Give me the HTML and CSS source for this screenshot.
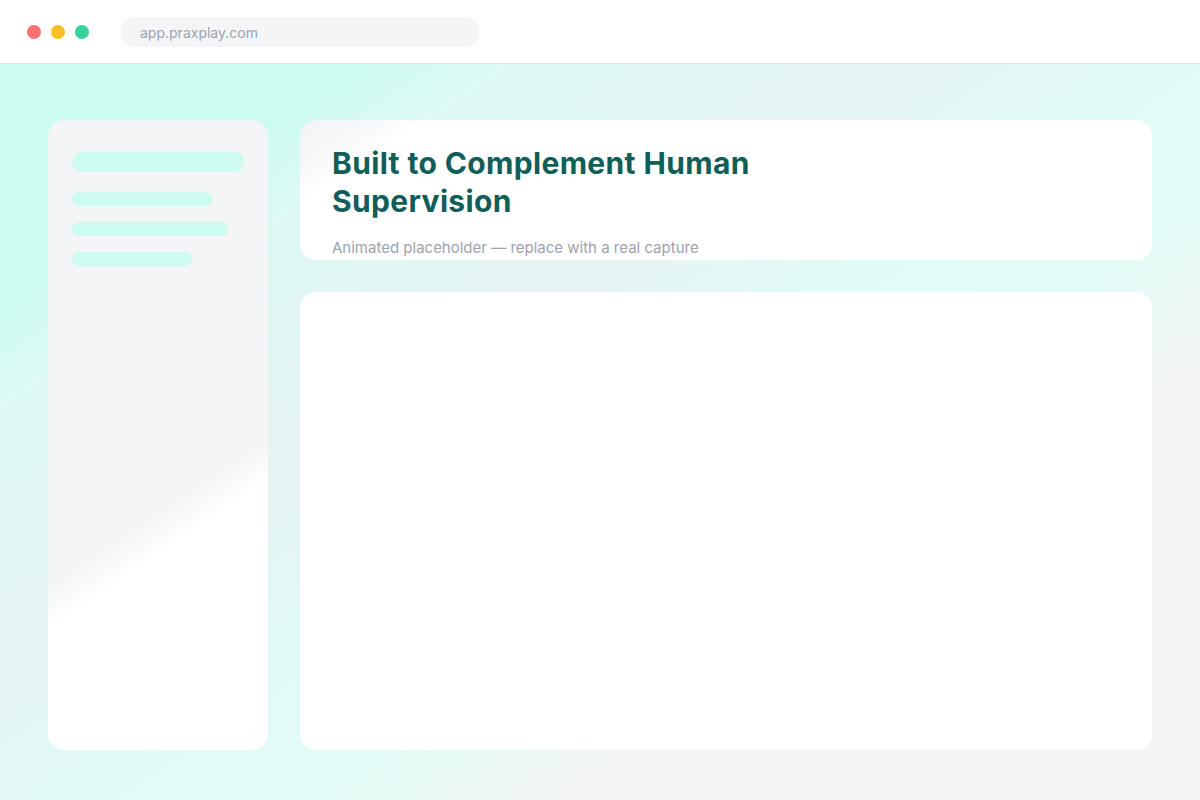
FILE: index.html
```html
<!DOCTYPE html>
<html lang="en">
<head>
    <meta charset="UTF-8">
    <meta name="viewport" content="width=device-width, initial-scale=1.0">
    <title>PraxPlay</title>
    <link rel="stylesheet" href="styles.css">
</head>
<body>
    <div class="browser-bar">
        <div class="dots">
            <span class="dot red"></span>
            <span class="dot yellow"></span>
            <span class="dot green"></span>
        </div>
        <div class="url">app.praxplay.com</div>
    </div>

    <div class="stage">
        <aside class="sidebar">
            <div class="bar bar-lg"></div>
            <div class="bar bar-a"></div>
            <div class="bar bar-b"></div>
            <div class="bar bar-c"></div>
        </aside>

        <main class="content">
            <div class="card header-card">
                <h1>Built to Complement Human Supervision</h1>
                <p>Animated placeholder — replace with a real capture</p>
            </div>
            <div class="card capture"></div>
        </main>
    </div>
</body>
</html>
```

FILE: styles.css
```css
* { box-sizing: border-box; }
html, body { margin: 0; height: 100%; }
body { font-family: Inter, "Noto Sans", sans-serif; background: #fff; display: flex; flex-direction: column; }

.browser-bar { height: 64px; background: #fff; border-bottom: 1px solid #e5e7eb; display: flex; align-items: center; padding-left: 27px; gap: 31px; flex-shrink: 0; }
.dots { display: flex; gap: 10px; }
.dot { width: 14px; height: 14px; border-radius: 50%; display: block; }
.red { background: #fe7171; }
.yellow { background: #fbbf24; }
.green { background: #34d399; }
.url { width: 360px; height: 30px; border-radius: 15px; background: #f4f5f7; color: #9ca3af; font-size: 14px; line-height: 31px; padding-left: 20px; }

.stage {
    flex: 1;
    display: grid;
    grid-template-columns: 220px 1fr;
    gap: 32px;
    padding: 56px 48px 50px;
    background: linear-gradient(146deg, #ccfbf1 0%, #ccfbf1 16%, #dcfaf5 21%, #e6f3f3 39%, #e0fbf6 51%, #e3fbf6 62%, #f4f5f7 72%, #f4f5f7 100%);
}

.sidebar {
    border-radius: 16px;
    padding: 32px 24px;
    display: flex;
    flex-direction: column;
    align-items: flex-start;
    gap: 16px;
    background: linear-gradient(146deg, #f4f5f7 0%, #f4f5f7 60%, #fff 65.5%, #fff 100%);
}
.bar { height: 14px; border-radius: 7px; background: #ccfbf1; }
.bar-lg { width: 100%; height: 20px; border-radius: 10px; margin-bottom: 4px; }
.bar-a { width: 140px; }
.bar-b { width: 156px; }
.bar-c { width: 120px; }

.content { display: flex; flex-direction: column; gap: 32px; }
.card { border-radius: 16px; background: #fff; }
.header-card {
    height: 140px;
    overflow: hidden;
    padding: 25px 32px 0;
    background: linear-gradient(146deg, #f4f5f7 0%, #f5f6f8 5%, #fff 12%, #fff 100%);
}
.header-card h1 { margin: 0; max-width: 448px; font-size: 30px; line-height: 37.5px; font-weight: 700; letter-spacing: 0.35px; color: #115e59; }
.header-card p { margin: 16px 0 0; font-size: 15px; line-height: 24px; color: #9ca3af; }
.capture { flex: 1; background: #fff; }
```
